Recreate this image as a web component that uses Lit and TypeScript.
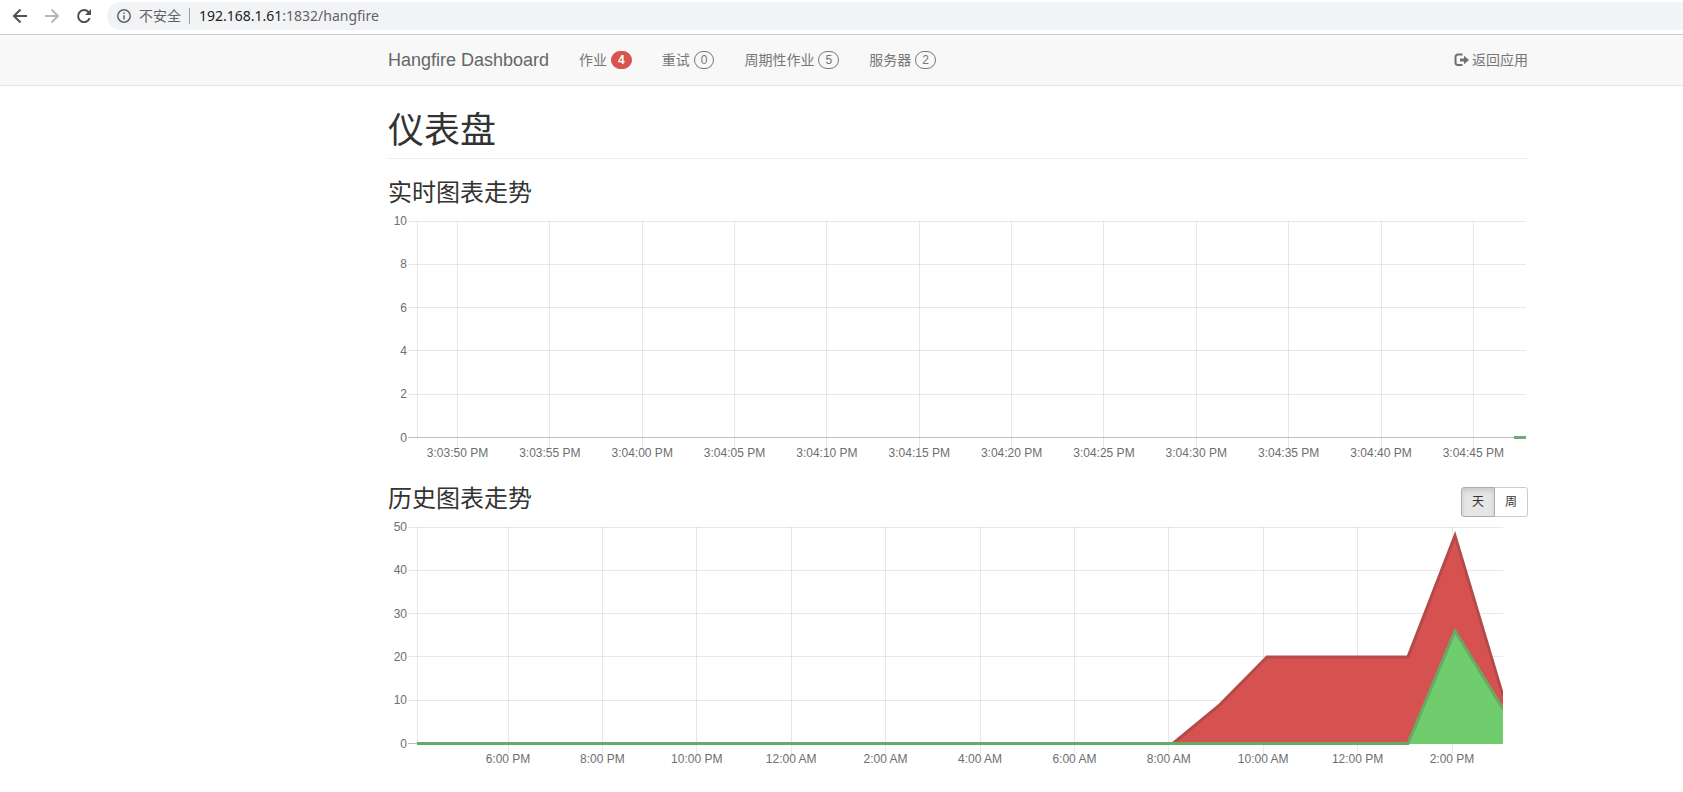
import { LitElement, html, svg, css } from "lit";
import { customElement, property, state } from "lit/decorators.js";

const SANS = css`"Liberation Sans", Arial, "Noto Sans CJK SC", sans-serif`;

interface Tick {
  at: number;
  label: string;
}

interface Series {
  fill: string;
  stroke: string;
  points: Array<[number, number]>;
}

/** Time chart with a value axis on the left and labels under the plot. */
@customElement("time-chart")
export class TimeChart extends LitElement {
  @property({ attribute: false }) ticks: Tick[] = [];
  @property({ attribute: false }) values: number[] = [];
  @property({ attribute: false }) series: Series[] = [];
  @property({ type: Number }) right = 1138;
  @property() name = "";

  static styles = css`
    :host {
      display: block;
    }
    svg {
      display: block;
      width: 100%;
      height: auto;
    }
    .grid {
      stroke: rgba(0, 0, 0, 0.09);
      stroke-width: 1;
      shape-rendering: crispEdges;
    }
    .zero {
      stroke: rgba(0, 0, 0, 0.25);
    }
    .tick {
      font: 12px ${SANS};
      fill: #6e6e6e;
    }
    .y {
      text-anchor: end;
    }
    .x {
      text-anchor: middle;
    }
    .line {
      fill: none;
      stroke-width: 3;
    }
  `;

  private y(value: number) {
    const max = Math.max(...this.values);
    return 223.5 - (value / max) * 216.5;
  }

  render() {
    const { right } = this;
    const path = (s: Series) =>
      s.points.map(([x, v], i) => `${i ? "L" : "M"}${x} ${this.y(v)}`).join("");
    return html`<svg viewBox="0 0 1140 251" role="img" aria-label=${this.name}>
      ${this.values.map(
        (v) => svg`
          <line class="grid ${v === 0 ? "zero" : ""}" x1="20" x2=${right} y1=${this.y(v)} y2=${this.y(v)}></line>
          <text class="tick y" x="19" y=${this.y(v) + 4}>${v}</text>`
      )}
      <line class="grid" x1="29.500" x2="29.500" y1="7" y2="224"></line>
      ${this.ticks.map(
        (t) => svg`
          <line class="grid" x1=${t.at} x2=${t.at} y1="7" y2="234"></line>
          <text class="tick x" x=${t.at} y="243">${t.label}</text>`
      )}
      <clipPath id="plot"><rect x="29" y="0" width=${right - 29} height="225"></rect></clipPath>
      <g clip-path="url(#plot)">
        ${this.series.map((s) => {
          const first = s.points[0][0];
          const last = s.points[s.points.length - 1][0];
          return svg`
            <path fill=${s.fill} d="${path(s)}L${last} 224L${first} 224Z"></path>
            <path class="line" stroke=${s.stroke} d=${path(s)}></path>`;
        })}
      </g>
    </svg>`;
  }
}

const REALTIME_TICKS: Tick[] = [
  "3:03:50", "3:03:55", "3:04:00", "3:04:05", "3:04:10", "3:04:15",
  "3:04:20", "3:04:25", "3:04:30", "3:04:35", "3:04:40", "3:04:45",
].map((t, i) => ({ at: 69.5 + i * 92.35, label: `${t} PM` }));

const HISTORY_TICKS: Tick[] = [
  "6:00 PM", "8:00 PM", "10:00 PM", "12:00 AM", "2:00 AM", "4:00 AM",
  "6:00 AM", "8:00 AM", "10:00 AM", "12:00 PM", "2:00 PM",
].map((label, i) => ({ at: 120 + i * 94.4, label }));

const REALTIME: Series[] = [
  { fill: "#6fcd6d", stroke: "#73a871", points: [[1126, 0], [1138, 0]] },
];

const HISTORY: Series[] = [
  {
    fill: "#d55251",
    stroke: "#b44a4a",
    points: [[29, 0], [785, 0], [832, 9], [879, 20], [1020, 20], [1067, 48], [1115, 11]],
  },
  {
    fill: "#6fcd6d",
    stroke: "#66ab65",
    points: [[29, 0], [1020, 0], [1067, 26], [1115, 8]],
  },
];

const NAV = [
  { label: "作业", count: 4, alert: true },
  { label: "重试", count: 0, alert: false },
  { label: "周期性作业", count: 5, alert: false },
  { label: "服务器", count: 2, alert: false },
];

@customElement("app-root")
export class AppRoot extends LitElement {
  @state() private period = "天";

  static styles = css`
    :host {
      display: block;
      min-height: 100vh;
      background: #fff;
      color: #333;
      font: 14px/20px ${SANS};
    }
    .browser {
      display: flex;
      align-items: center;
      gap: 16px;
      height: 34px;
      padding: 0 0 2px 12px;
      box-sizing: border-box;
    }
    .tool {
      display: block;
      width: 16px;
      height: 16px;
      padding: 0;
      border: 0;
      background: none;
      color: #4d5054;
    }
    .tool:disabled {
      color: #b5b7b9;
    }
    .tool svg {
      display: block;
    }
    .address {
      flex: 1;
      display: flex;
      align-items: center;
      height: 28px;
      margin-left: -1px;
      padding-left: 10px;
      border-radius: 14px 0 0 14px;
      background: #f2f3f4;
      color: #5f6368;
      font-family: "Noto Sans", "Noto Sans CJK SC", sans-serif;
    }
    .security {
      margin-left: 8px;
      padding-right: 8px;
      border-right: 1px solid #9aa0a6;
      line-height: 16px;
    }
    .url {
      margin-left: 9px;
    }
    .host {
      color: #202124;
    }
    .row {
      display: grid;
      grid-template-columns: minmax(15px, 388fr) minmax(0, 1140px) minmax(15px, 155fr);
    }
    .row > * {
      grid-column: 2;
    }
    .navbar {
      border: 1px solid #e4e4e4;
      border-width: 1px 0;
      border-top-color: #ccc;
      background: #f8f8f8;
    }
    .nav {
      display: flex;
      align-items: center;
      height: 50px;
      gap: 30px;
    }
    a {
      color: #777;
      text-decoration: none;
    }
    .brand {
      font-size: 18px;
      color: #666;
    }
    .link {
      display: flex;
      align-items: center;
      gap: 4px;
    }
    .badge {
      box-sizing: border-box;
      min-width: 20px;
      height: 18px;
      padding: 0 6px;
      border: 1px solid #777;
      border-radius: 10px;
      font-size: 12px;
      line-height: 16px;
      text-align: center;
    }
    .alert {
      border-color: #d9534f;
      background: #d9534f;
      color: #fff;
      font-weight: 700;
    }
    .back {
      margin-left: auto;
      gap: 2px;
    }
    h1,
    h2 {
      margin: 0;
      font-weight: 400;
    }
    h1 {
      padding: 24px 0 6px;
      border-bottom: 1px solid #eee;
      font-size: 36px;
      line-height: 42px;
    }
    h2 {
      font-size: 24px;
      line-height: 28px;
    }
    .heading {
      display: flex;
      justify-content: space-between;
      align-items: flex-start;
      padding-top: 20px;
      height: 35px;
    }
    .switch {
      display: flex;
      margin-top: 2px;
    }
    .option {
      box-sizing: border-box;
      width: 34px;
      height: 30px;
      padding: 0;
      border: 1px solid #ccc;
      border-radius: 0 3px 3px 0;
      background: #fff;
      color: #333;
      font: 12px/18px ${SANS};
    }
    .option:first-child {
      border-radius: 3px 0 0 3px;
      margin-right: -1px;
    }
    .option[aria-pressed="true"] {
      z-index: 1;
      border-color: #adadad;
      background: #e6e6e6;
      box-shadow: inset 0 3px 5px rgba(0, 0, 0, 0.125);
    }
  `;

  render() {
    return html`
      <div class="browser">
        <button class="tool" aria-label="后退">
          <svg width="16" height="16" viewBox="0 0 16 16" fill="none" stroke="currentColor" stroke-width="2"><path d="M15 8H2.500M8.500 1.500 2 8l6.500 6.500"></path></svg>
        </button>
        <button class="tool" aria-label="前进" disabled>
          <svg width="16" height="16" viewBox="0 0 16 16" fill="none" stroke="currentColor" stroke-width="2"><path d="M1 8h12.500M7.500 1.500 14 8l-6.500 6.500"></path></svg>
        </button>
        <button class="tool" aria-label="刷新">
          <svg width="16" height="16" viewBox="0 0 16 16" fill="none" stroke="currentColor" stroke-width="2"><path d="M13.700 10.200A6 6 0 1 1 12.500 4L14 5.500"></path><path d="M15 1v6H9z" fill="currentColor" stroke="none"></path></svg>
        </button>
        <div class="address">
          <svg width="14" height="14" viewBox="0 0 14 14" fill="none" stroke="currentColor" stroke-width="1.500"><circle cx="7" cy="7" r="6.200"></circle><path d="M7 6.200v4.300M7 3.500v1.500"></path></svg>
          <span class="security">不安全</span>
          <span class="url"><span class="host">192.168.1.61</span>:1832/hangfire</span>
        </div>
      </div>
      <header class="navbar row">
        <nav class="nav">
          <a class="brand" href="#">Hangfire Dashboard</a>
          ${NAV.map(
            (n) => html`<a class="link" href="#">${n.label}<span class="badge ${n.alert ? "alert" : ""}">${n.count}</span></a>`
          )}
          <a class="link back" href="#">
            <svg width="16" height="14" viewBox="0 0 16 14" fill="none"><path d="M8.500 1.500H4Q1.500 1.500 1.500 4v5.500Q1.500 12 4 12h4.500" stroke="#707070" stroke-width="2"></path><path d="M6 5.500h4V2.800L15 7l-5 4.200V8.500H6z" fill="#707070"></path></svg>返回应用</a>
        </nav>
      </header>
      <main class="row">
        <h1>仪表盘</h1>
        <div class="heading"><h2>实时图表走势</h2></div>
        <time-chart
          name="实时图表走势"
          .values=${[0, 2, 4, 6, 8, 10]}
          .ticks=${REALTIME_TICKS}
          .series=${REALTIME}
        ></time-chart>
        <div class="heading">
          <h2>历史图表走势</h2>
          <div class="switch" role="group" aria-label="时间范围">
            ${["天", "周"].map(
              (p) => html`<button
                class="option"
                aria-pressed=${p === this.period ? "true" : "false"}
                @click=${() => (this.period = p)}
              >${p}</button>`
            )}
          </div>
        </div>
        <time-chart
          name="历史图表走势"
          right="1115"
          .values=${[0, 10, 20, 30, 40, 50]}
          .ticks=${HISTORY_TICKS}
          .series=${HISTORY}
        ></time-chart>
      </main>
    `;
  }
}
